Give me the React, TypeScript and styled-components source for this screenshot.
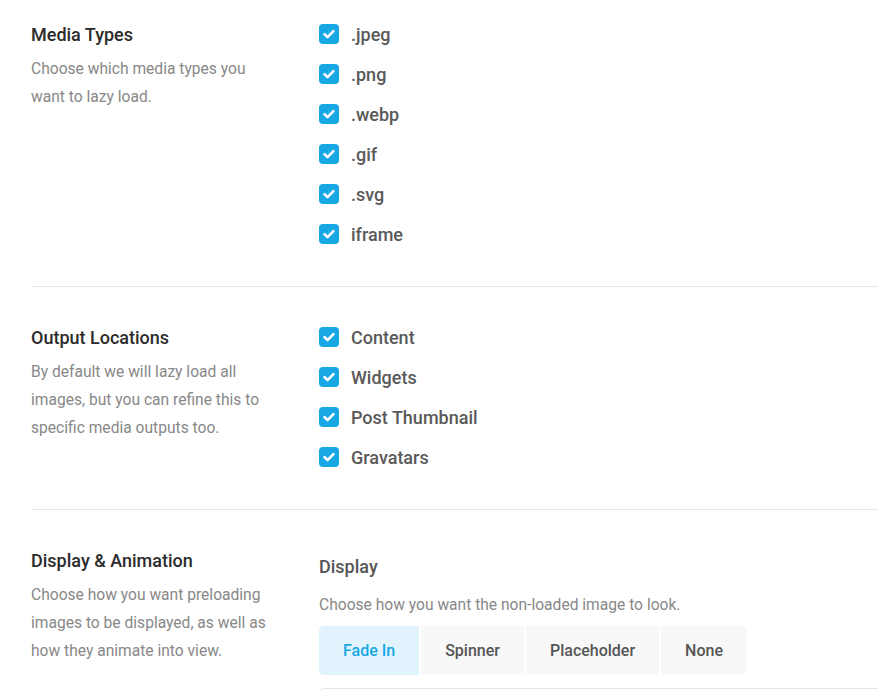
import React from "react";
import styled, { createGlobalStyle } from "styled-components";

const Global = createGlobalStyle`
  html, body { margin: 0; padding: 0; background: #fff; }
  body { font-family: Roboto, "Noto Sans", Arial, sans-serif; -webkit-font-smoothing: antialiased; }
  * { box-sizing: border-box; }
`;

const Page = styled.div`
  padding-left: 31px;
  overflow: hidden;
  height: 690px;
`;

const Section = styled.section<{ $first?: boolean; $last?: boolean }>`
  display: grid;
  grid-template-columns: 288px 1fr;
  padding: ${(p) => (p.$first ? "22px" : "38px")} 0 ${(p) => (p.$last ? "0" : "40px")};
  border-bottom: ${(p) => (p.$last ? "none" : "1px solid #e6e6e6")};
`;

const Info = styled.div`
  padding-right: 43px;
`;

const Title = styled.h3`
  margin: 1px 0 0;
  font-size: 18px;
  line-height: 24px;
  font-weight: 500;
  color: #2b2b2b;
`;

const Desc = styled.p`
  margin: 8px 0 0;
  font-size: 15.6px;
  line-height: 28px;
  color: #888;
  font-weight: 400;
`;

const Options = styled.div`
  display: flex;
  flex-direction: column;
  gap: 16px;
`;

const Row = styled.label`
  display: flex;
  align-items: center;
  gap: 12px;
  height: 24px;
  font-size: 18px;
  font-weight: 500;
  color: #595959;
`;

const Box = styled.span`
  width: 20px;
  height: 20px;
  border-radius: 4px;
  background: #17a8e3;
  display: flex;
  align-items: center;
  justify-content: center;
  flex: none;
`;

const SubTitle = styled.h4`
  margin: 7px 0 0;
  font-size: 18px;
  line-height: 24px;
  font-weight: 500;
  color: #555;
`;

const SubDesc = styled.p`
  margin: 14px 0 0;
  font-size: 15.6px;
  line-height: 24px;
  color: #888;
`;

const Tabs = styled.div`
  display: inline-flex;
  margin-top: 9px;
  gap: 2px;
  border-radius: 5px;
  overflow: hidden;
  align-self: flex-start;
`;

const Tab = styled.button<{ $active?: boolean }>`
  border: none;
  height: 49px;
  padding: 0 24px;
  font-family: inherit;
  font-size: 16px;
  font-weight: 500;
  background: ${(p) => (p.$active ? "#e1f4fd" : "#f8f8f8")};
  color: ${(p) => (p.$active ? "#17a8e3" : "#555")};
`;

const Right = styled.div`
  display: flex;
  flex-direction: column;
`;

const Panel = styled.div`
  margin-top: 13px;
  height: 60px;
  border: 1px solid #e6e6e6;
  border-radius: 5px;
  margin-right: -4px;
`;

const Check = () => (
  <Box>
    <svg width="14" height="14" viewBox="0 0 14 14" fill="none">
      <path d="M2.6 7.2 L5.6 10.1 L11.4 4.1" stroke="#fff" strokeWidth="2.6" strokeLinecap="round" strokeLinejoin="round" />
    </svg>
  </Box>
);

const media = [".jpeg", ".png", ".webp", ".gif", ".svg", "iframe"];
const outputs = ["Content", "Widgets", "Post Thumbnail", "Gravatars"];
const tabs = ["Fade In", "Spinner", "Placeholder", "None"];

export default function App() {
  return (
    <Page>
      <Global />
      <Section $first>
        <Info>
          <Title>Media Types</Title>
          <Desc>Choose which media types you want to lazy load.</Desc>
        </Info>
        <Options>
          {media.map((m) => (
            <Row key={m}>
              <Check />
              {m}
            </Row>
          ))}
        </Options>
      </Section>
      <Section>
        <Info>
          <Title>Output Locations</Title>
          <Desc>By default we will lazy load all images, but you can refine this to specific media outputs too.</Desc>
        </Info>
        <Options>
          {outputs.map((m) => (
            <Row key={m}>
              <Check />
              {m}
            </Row>
          ))}
        </Options>
      </Section>
      <Section $last>
        <Info>
          <Title>Display &amp; Animation</Title>
          <Desc>Choose how you want preloading images to be displayed, as well as how they animate into view.</Desc>
        </Info>
        <Right>
          <SubTitle>Display</SubTitle>
          <SubDesc>Choose how you want the non-loaded image to look.</SubDesc>
          <Tabs>
            {tabs.map((t, i) => (
              <Tab key={t} $active={i === 0}>
                {t}
              </Tab>
            ))}
          </Tabs>
          <Panel />
        </Right>
      </Section>
    </Page>
  );
}
